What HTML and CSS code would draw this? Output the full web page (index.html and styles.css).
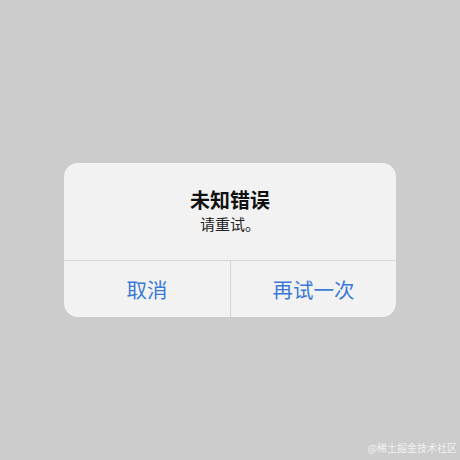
FILE: index.html
```html
<!DOCTYPE html>
<html lang="zh">
<head>
<meta charset="utf-8">
<link rel="stylesheet" href="styles.css">
</head>
<body>
<div class="screen">
  <div class="alert">
    <div class="alert-body">
      <div class="alert-title">未知错误</div>
      <div class="alert-msg">请重试。</div>
    </div>
    <div class="alert-actions">
      <div class="alert-btn">取消</div>
      <div class="alert-btn">再试一次</div>
    </div>
  </div>
  <div class="watermark">@稀土掘金技术社区</div>
</div>
</body>
</html>
```

FILE: styles.css
```css
html, body {
  margin: 0;
  padding: 0;
}
body {
  font-family: "Noto Sans CJK SC", "Noto Sans", sans-serif;
  background: #cccccc;
}
.screen {
  width: 460px;
  height: 460px;
  position: relative;
  display: flex;
  justify-content: center;
  padding-top: 163px;
  box-sizing: border-box;
}
.alert {
  width: 332px;
  height: 154px;
  background: #f2f2f2;
  border-radius: 14px;
  display: flex;
  flex-direction: column;
  overflow: hidden;
}
.alert-body {
  height: 98px;
  border-bottom: 1px solid #d6d6d6;
  display: flex;
  flex-direction: column;
  align-items: center;
  padding-top: 23px;
  box-sizing: border-box;
}
.alert-title {
  font-size: 20px;
  font-weight: 700;
  color: #111;
  line-height: 27px;
}
.alert-msg {
  font-size: 15px;
  color: #222;
  line-height: 20px;
  margin-top: 1px;
}
.alert-actions {
  flex: 1;
  display: grid;
  grid-template-columns: 1fr 1fr;
}
.alert-btn {
  display: flex;
  align-items: center;
  justify-content: center;
  font-size: 20.5px;
  color: #3a7ad5;
}
.alert-btn + .alert-btn {
  border-left: 1px solid #d6d6d6;
}
.watermark {
  position: absolute;
  right: 3px;
  bottom: 5px;
  font-size: 10px;
  color: rgba(255,255,255,0.75);
}
```
